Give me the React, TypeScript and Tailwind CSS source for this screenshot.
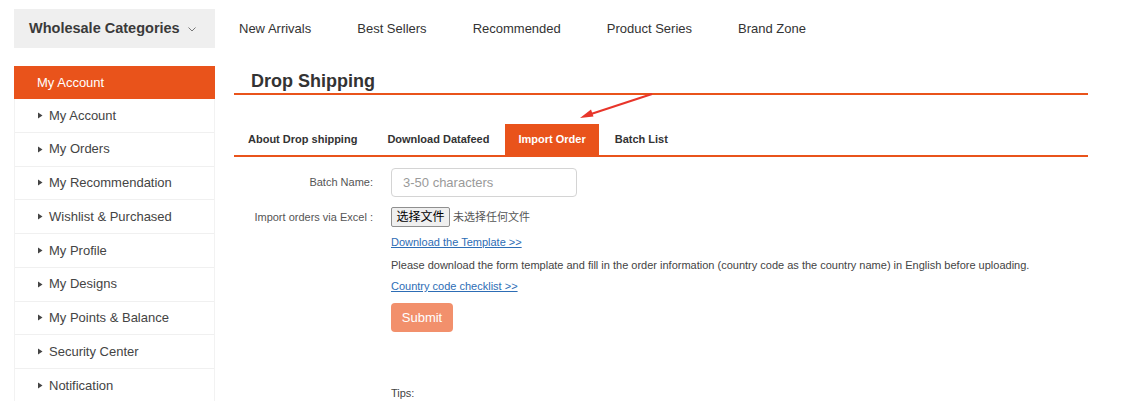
import React from 'react'

const navLinks = ['New Arrivals', 'Best Sellers', 'Recommended', 'Product Series', 'Brand Zone']

const sideItems = [
  'My Account',
  'My Orders',
  'My Recommendation',
  'Wishlist & Purchased',
  'My Profile',
  'My Designs',
  'My Points & Balance',
  'Security Center',
  'Notification',
]

const tabs = ['About Drop shipping', 'Download Datafeed', 'Import Order', 'Batch List']

const font = { fontFamily: '"Liberation Sans", Arial, "Noto Sans CJK SC", sans-serif' }

function Caret() {
  return (
    <svg width="5" height="7" viewBox="0 0 5 7" className="shrink-0">
      <path d="M0 0.5 L4.5 3.5 L0 6.5 Z" fill="#444" />
    </svg>
  )
}

export default function App() {
  return (
    <div className="w-[1130px] h-[401px] overflow-hidden bg-white text-[#333]" style={font}>
      {/* Top bar */}
      <div className="flex items-center pl-[14px] pt-[9px]">
        <div className="w-[201px] h-[39px] bg-[#efefef] flex items-center pl-[15px] gap-[8px]">
          <span className="text-[14.5px] font-bold text-[#3a3a3a]">Wholesale Categories</span>
          <svg width="8" height="5" viewBox="0 0 8 5" className="mt-[2px]">
            <path d="M0.5 0.5 L4 4 L7.5 0.5" fill="none" stroke="#777" strokeWidth="1" />
          </svg>
        </div>
        <nav className="flex items-center gap-[46px] ml-[24px]">
          {navLinks.map((l) => (
            <span key={l} className="text-[13px] text-[#333]">
              {l}
            </span>
          ))}
        </nav>
      </div>

      <div className="flex pl-[14px] mt-[18px]">
        {/* Sidebar */}
        <aside className="w-[201px] shrink-0">
          <div className="h-[33px] bg-[#e9531b] text-white text-[13px] flex items-center pl-[23px]">
            My Account
          </div>
          <ul className="border-x border-[#f2f2f2]">
            {sideItems.map((item) => (
              <li
                key={item}
                className="h-[33.75px] border-b border-[#f0f0f0] flex items-center pl-[23px] gap-[6px] text-[13px] text-[#444]"
              >
                <Caret />
                {item}
              </li>
            ))}
          </ul>
        </aside>

        {/* Main */}
        <main className="relative ml-[19px] w-[854px]">
          <div className="h-[29px] pl-[17px] flex items-center border-b-2 border-[#e9531b]">
            <h1 className="text-[18px] font-bold text-[#333] leading-none mt-[2px]">Drop Shipping</h1>
          </div>

          <div className="flex items-end gap-[2px] h-[62px] border-b-2 border-[#e9531b]">
            {tabs.map((t) => {
              const active = t === 'Import Order'
              return (
                <div
                  key={t}
                  className={
                    active
                      ? 'h-[31px] px-[13px] flex items-center text-[11px] font-bold bg-[#e9531b] text-white'
                      : 'h-[31px] px-[14px] flex items-center text-[11px] font-bold text-[#333]'
                  }
                >
                  {t}
                </div>
              )
            })}
          </div>

          {/* annotation arrow */}
          <svg className="absolute left-[340px] top-[25px]" width="82" height="32" viewBox="0 0 82 32">
            <line x1="78" y1="3" x2="14" y2="24" stroke="#e8352a" strokeWidth="2.2" />
            <path d="M6 27 L17 18.5 L19.5 25.5 Z" fill="#e8352a" />
          </svg>

          {/* Form */}
          <div className="flex items-center mt-[11px]">
            <label className="w-[139px] text-right text-[11px] text-[#555]">Batch Name:</label>
            <input
              placeholder="3-50 characters"
              className="ml-[18px] w-[186px] h-[29px] rounded-[4px] border border-[#d4d4d4] px-[11px] text-[13px] placeholder:text-[#9a9a9a] outline-none"
              style={font}
            />
          </div>

          <div className="flex items-center mt-[10px]">
            <label className="w-[139px] text-right text-[11px] text-[#555]">Import orders via Excel :</label>
            <div className="ml-[18px] flex items-center">
              <button
                className="h-[20px] w-[59px] bg-[#efefef] border border-[#8f8f8f] rounded-[2px] text-[12px] text-black flex items-center justify-center"
                style={font}
              >
                选择文件
              </button>
              <span className="ml-[3px] text-[11px] text-[#555]">未选择任何文件</span>
            </div>
          </div>

          <div className="ml-[157px] text-[11px] leading-[16px]">
            <a className="block mt-[7px] text-[#2d6db5] underline w-fit">Download the Template &gt;&gt;</a>
            <p className="mt-[7px] text-[#444] whitespace-nowrap">
              Please download the form template and fill in the order information (country code as the country name) in
              English before uploading.
            </p>
            <a className="block mt-[5px] text-[#2d6db5] underline w-fit">Country code checklist &gt;&gt;</a>
            <button
              className="mt-[9px] h-[29px] w-[62px] rounded-[4px] bg-[#f2906c] text-white text-[13px]"
              style={font}
            >
              Submit
            </button>
            <p className="mt-[53px] text-[#444]">Tips:</p>
          </div>
        </main>
      </div>
    </div>
  )
}
